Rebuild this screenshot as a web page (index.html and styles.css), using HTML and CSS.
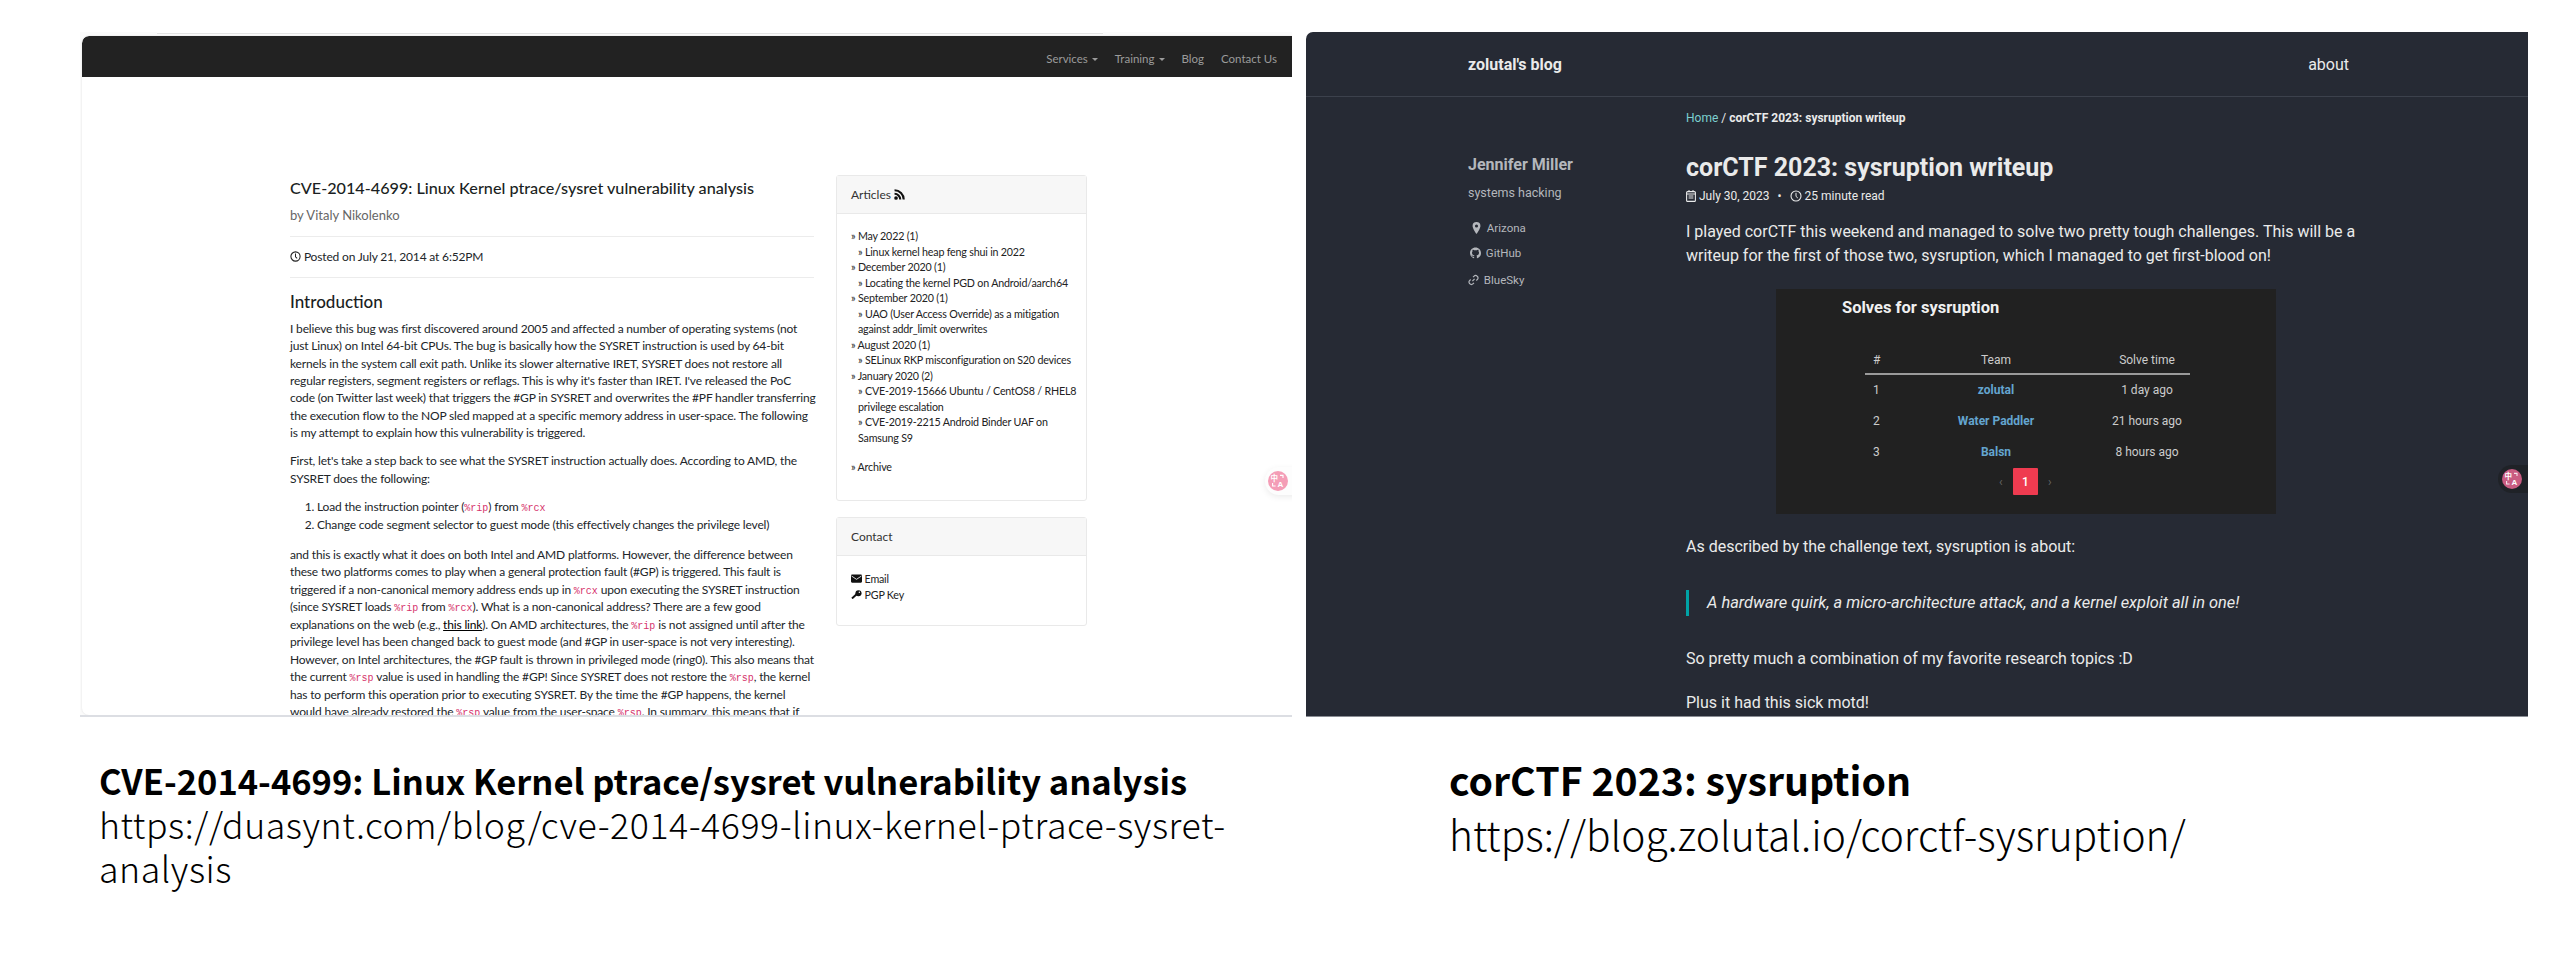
FILE: index.html
```html
<!DOCTYPE html>
<html lang="en">
<head>
<meta charset="utf-8">
<title>Blog references</title>
<link rel="stylesheet" href="styles.css">
</head>
<body>
<main class="page">
  <section class="fig fig-left">
    <div class="shot shot-light">
      <div class="tab-line"></div>
      <div class="lp">
        <nav class="lnav">
          <a>Services<i class="caret"></i></a>
          <a>Training<i class="caret"></i></a>
          <a>Blog</a>
          <a>Contact Us</a>
        </nav>
        <div class="lbody">
          <article class="larticle">
            <h1 class="ltitle">CVE-2014-4699: Linux Kernel ptrace/sysret vulnerability analysis</h1>
            <p class="lby">by Vitaly Nikolenko</p>
            <hr class="lhr lhr-a">
            <p class="lposted"><svg class="ico-clock" viewBox="0 0 12 12"><circle cx="6" cy="6" r="5" fill="none" stroke="#222" stroke-width="1.2"/><path d="M6 2.8V6.4L7.8 8" fill="none" stroke="#222" stroke-width="1.1"/></svg> Posted on July 21, 2014 at 6:52PM</p>
            <hr class="lhr lhr-b">
            <h2 class="lh2">Introduction</h2>
            <p class="lp1">I believe this bug was first discovered around 2005 and affected a number of operating systems (not<br>just Linux) on Intel 64-bit CPUs. The bug is basically how the SYSRET instruction is used by 64-bit<br>kernels in the system call exit path. Unlike its slower alternative IRET, SYSRET does not restore all<br>regular registers, segment registers or reflags. This is why it's faster than IRET. I've released the PoC<br>code (on Twitter last week) that triggers the #GP in SYSRET and overwrites the #PF handler transferring<br>the execution flow to the NOP sled mapped at a specific memory address in user-space. The following<br>is my attempt to explain how this vulnerability is triggered.</p>
            <p class="lp2">First, let's take a step back to see what the SYSRET instruction actually does. According to AMD, the<br>SYSRET does the following:</p>
            <ol class="lol">
              <li>Load the instruction pointer (<code>%rip</code>) from <code>%rcx</code></li>
              <li>Change code segment selector to guest mode (this effectively changes the privilege level)</li>
            </ol>
            <p class="lp3">and this is exactly what it does on both Intel and AMD platforms. However, the difference between<br>these two platforms comes to play when a general protection fault (#GP) is triggered. This fault is<br>triggered if a non-canonical memory address ends up in <code>%rcx</code> upon executing the SYSRET instruction<br>(since SYSRET loads <code>%rip</code> from <code>%rcx</code>). What is a non-canonical address? There are a few good<br>explanations on the web (e.g., <a class="ulink">this link</a>). On AMD architectures, the <code>%rip</code> is not assigned until after the<br>privilege level has been changed back to guest mode (and #GP in user-space is not very interesting).<br>However, on Intel architectures, the #GP fault is thrown in privileged mode (ring0). This also means that<br>the current <code>%rsp</code> value is used in handling the #GP! Since SYSRET does not restore the <code>%rsp</code>, the kernel<br>has to perform this operation prior to executing SYSRET. By the time the #GP happens, the kernel<br>would have already restored the <code>%rsp</code> value from the user-space <code>%rsp</code>. In summary, this means that if</p>
          </article>
          <aside class="lside">
            <div class="card card-articles">
              <div class="card-h">Articles <svg class="ico-rss" viewBox="0 0 12 12"><circle cx="2.2" cy="9.8" r="2" fill="#111"/><path d="M.6 5.2A6.2 6.2 0 0 1 6.8 11.4M.6 1.4A10 10 0 0 1 10.6 11.4" fill="none" stroke="#111" stroke-width="2.3"/></svg></div>
              <div class="card-b">
                <div>» May 2022 (1)</div>
                <div class="sub">» Linux kernel heap feng shui in 2022</div>
                <div>» December 2020 (1)</div>
                <div class="sub">» Locating the kernel PGD on Android/aarch64</div>
                <div>» September 2020 (1)</div>
                <div class="sub">» UAO (User Access Override) as a mitigation<br>against addr_limit overwrites</div>
                <div>» August 2020 (1)</div>
                <div class="sub">» SELinux RKP misconfiguration on S20 devices</div>
                <div>» January 2020 (2)</div>
                <div class="sub">» CVE-2019-15666 Ubuntu / CentOS8 / RHEL8<br>privilege escalation</div>
                <div class="sub">» CVE-2019-2215 Android Binder UAF on<br>Samsung S9</div>
                <div class="archive">» Archive</div>
              </div>
            </div>
            <div class="card card-contact">
              <div class="card-h">Contact</div>
              <div class="card-b">
                <div class="ci"><svg class="ico-mail" viewBox="0 0 12 9"><rect width="12" height="9" rx="1.2" fill="#111"/><path d="M.6 1.8 6 5.4l5.4-3.6" fill="none" stroke="#fff" stroke-width=".9"/></svg> Email</div>
                <div class="ci"><svg class="ico-mail" viewBox="0 0 12 10"><circle cx="8.2" cy="3.6" r="3.4" fill="#111"/><path d="M6.4 4.4 1 9.4" stroke="#111" stroke-width="2.2"/><circle cx="9.2" cy="2.6" r=".8" fill="#fff"/></svg> PGP Key</div>
              </div>
            </div>
          </aside>
        </div>
      </div>
      <div class="trans trans-l"><svg class="ico-tr" viewBox="0 0 20 20"><circle cx="10" cy="10" r="10" fill="#f49db6"/><text x="2.6" y="10" class="tr-zh">中</text><text x="9.4" y="16" class="tr-a">A</text><path d="M12 4.4h3v2.6M4.6 12v3h3" fill="none" stroke="#fff" stroke-width="1.1"/></svg></div>
    </div>
    <div class="cap cap-left">
      <h3>CVE-2014-4699: Linux Kernel ptrace/sysret vulnerability analysis</h3>
      <p>https://duasynt.com/blog/cve-2014-4699-linux-kernel-ptrace-sysret-<br>analysis</p>
    </div>
  </section>

  <section class="fig fig-right">
    <div class="shot shot-dark">
      <header class="rhead"><span class="rbrand">zolutal's blog</span><span class="rabout">about</span></header>
      <div class="rcrumb"><a class="teal">Home</a> / <b>corCTF 2023: sysruption writeup</b></div>
      <div class="rrow">
        <aside class="rside">
          <div class="rname">Jennifer Miller</div>
          <div class="rbio">systems hacking</div>
          <div class="rlink rl-1"><svg class="ico-s" viewBox="0 0 10 14"><path fill-rule="evenodd" d="M5 0a4.6 4.6 0 0 0-4.6 4.6C.4 7.6 5 14 5 14s4.6-6.4 4.6-9.4A4.6 4.6 0 0 0 5 0Zm0 6.4a1.8 1.8 0 1 1 0-3.6 1.8 1.8 0 0 1 0 3.6Z" fill="#b4b7bc"/></svg> Arizona</div>
          <div class="rlink rl-2"><svg class="ico-s" viewBox="0 0 16 16"><path fill="#b4b7bc" d="M8 0C3.58 0 0 3.58 0 8c0 3.54 2.29 6.53 5.47 7.59.4.07.55-.17.55-.38 0-.19-.01-.82-.01-1.49-2.01.37-2.53-.49-2.69-.94-.09-.23-.48-.94-.82-1.13-.28-.15-.68-.52-.01-.53.63-.01 1.08.58 1.23.82.72 1.21 1.87.87 2.33.66.07-.52.28-.87.51-1.07-1.78-.2-3.64-.89-3.64-3.95 0-.87.31-1.59.82-2.15-.08-.2-.36-1.02.08-2.12 0 0 .67-.21 2.2.82.64-.18 1.32-.27 2-.27.68 0 1.36.09 2 .27 1.53-1.04 2.2-.82 2.2-.82.44 1.1.16 1.92.08 2.12.51.56.82 1.27.82 2.15 0 3.07-1.87 3.75-3.65 3.95.29.25.54.73.54 1.48 0 1.07-.01 1.93-.01 2.2 0 .21.15.46.55.38A8.013 8.013 0 0016 8c0-4.42-3.58-8-8-8z"/></svg> GitHub</div>
          <div class="rlink rl-3"><svg class="ico-s" viewBox="0 0 14 14"><path d="M5.6 8.4 8.4 5.6M6.4 3.4l1.4-1.4a2.6 2.6 0 0 1 3.7 0l.5.5a2.6 2.6 0 0 1 0 3.7l-1.4 1.4M7.6 10.6 6.2 12a2.6 2.6 0 0 1-3.7 0L2 11.5a2.6 2.6 0 0 1 0-3.7l1.4-1.4" fill="none" stroke="#b4b7bc" stroke-width="1.5"/></svg> BlueSky</div>
        </aside>
        <article class="rart">
          <h1 class="rtitle">corCTF 2023: sysruption writeup</h1>
          <div class="rmeta"><svg class="ico-m" viewBox="0 0 10 12"><rect x=".6" y="1.6" width="8.8" height="9.8" rx="1" fill="none" stroke="#e8e9ea" stroke-width="1.1"/><path d="M.6 4h8.8M2.6 6h4.8M2.6 8h4.8M3 0v2M7 0v2" stroke="#e8e9ea" stroke-width="1"/></svg> July 30, 2023 <span class="dot">•</span> <svg class="ico-m2" viewBox="0 0 12 12"><circle cx="6" cy="6" r="5" fill="none" stroke="#e8e9ea" stroke-width="1.1"/><path d="M6 2.8V6.4L7.8 8" fill="none" stroke="#e8e9ea"/></svg> 25 minute read</div>
          <p class="rp rp-1">I played corCTF this weekend and managed to solve two pretty tough challenges. This will be a<br>writeup for the first of those two, sysruption, which I managed to get first-blood on!</p>
          <div class="solves">
            <div class="solves-t">Solves for sysruption</div>
            <table class="stable">
              <colgroup><col class="c1"><col class="c2"><col class="c3"></colgroup>
              <thead><tr><th class="tl">#</th><th>Team</th><th>Solve time</th></tr></thead>
              <tbody>
                <tr><td class="tl">1</td><td><a class="team">zolutal</a></td><td>1 day ago</td></tr>
                <tr><td class="tl">2</td><td><a class="team">Water Paddler</a></td><td>21 hours ago</td></tr>
                <tr><td class="tl">3</td><td><a class="team">Balsn</a></td><td>8 hours ago</td></tr>
              </tbody>
            </table>
            <div class="pager"><span class="chev">‹</span><span class="pnum">1</span><span class="chev">›</span></div>
          </div>
          <p class="rp rp-2">As described by the challenge text, sysruption is about:</p>
          <blockquote class="rq">A hardware quirk, a micro-architecture attack, and a kernel exploit all in one!</blockquote>
          <p class="rp rp-3">So pretty much a combination of my favorite research topics :D</p>
          <p class="rp rp-4">Plus it had this sick motd!</p>
        </article>
      </div>
      <div class="trans trans-r"><svg class="ico-tr" viewBox="0 0 20 20"><circle cx="10" cy="10" r="10" fill="#c95c82"/><text x="2.6" y="10" class="tr-zh">中</text><text x="9.4" y="16" class="tr-a">A</text><path d="M12 4.4h3v2.6M4.6 12v3h3" fill="none" stroke="#f3e3e9" stroke-width="1.1"/></svg></div>
    </div>
    <div class="cap cap-right">
      <h3>corCTF 2023: sysruption</h3>
      <p>https://blog.zolutal.io/corctf-sysruption/</p>
    </div>
  </section>
</main>
</body>
</html>
```

FILE: styles.css
```css
* { box-sizing: border-box; }
html, body { margin: 0; padding: 0; background: #fff; }
body { height: 971px; overflow: hidden; font-family: "Lato", "Liberation Sans", sans-serif; }
.page { display: flex; align-items: flex-start; padding-top: 32px; }
h1, h2, h3, p, ol, hr, blockquote { margin: 0; padding: 0; }

.fig-left { width: 1298px; padding-left: 80px; flex: none; }
.fig-right { width: 1222px; margin-left: 8px; flex: none; }

.shot { position: relative; overflow: hidden; height: 685px; }
.shot-light { width: 1212px; background: #fbfbfb; padding: 4px 0 0 2px; border-bottom: 2px solid #dcdee3; }
.tab-line { position: absolute; top: 0; left: 77px; width: 946px; height: 2px; background: #fff; border-bottom: 1px solid #e4e4e4; }
.lp { background: #fff; height: 679px; border-radius: 7px 0 0 7px; overflow: hidden; box-shadow: 0 0 2px #ddd; }

.lnav { height: 41px; background: #222; border-radius: 7px 0 0 0; display: flex; justify-content: flex-end; align-items: center; gap: 17px; padding: 3px 15px 0 0; font-size: 11.5px; color: #9b9b9b; }
.caret { display: inline-block; border: 3px solid transparent; border-top-color: #9b9b9b; border-bottom: 0; margin-left: 4px; vertical-align: 2px; }

.lbody { display: flex; padding: 98px 0 0 208px; color: #212529; font-size: 12px; letter-spacing: -.17px; }
.larticle { width: 524px; flex: none; padding-top: 3px; white-space: nowrap; }
.ltitle { font-size: 16.2px; line-height: 20px; font-weight: 500; color: #1b1f23; letter-spacing: 0; }
.lby { margin-top: 7px; font-size: 13px; line-height: 20px; color: #666; letter-spacing: 0; }
.lhr { border: 0; height: 1px; background: #ececec; }
.lhr-a { margin-top: 11px; }
.lposted { margin-top: 11px; line-height: 18px; font-size: 12px; }
.lhr-b { margin-top: 11px; }
.ico-clock { width: 11px; height: 11px; vertical-align: -1px; }
.lh2 { margin-top: 14px; font-size: 17px; line-height: 20px; font-weight: 500; color: #1b1f23; letter-spacing: 0; }
.lp1 { margin-top: 8px; line-height: 17.33px; }
.lp2 { margin-top: 11px; line-height: 17.33px; }
.lol { margin-top: 11px; padding-left: 27px; line-height: 18.3px; }
.lp3 { margin-top: 11px; line-height: 17.5px; }
code { font-family: "Liberation Mono", monospace; font-size: 10px; line-height: 1; color: #d6336c; letter-spacing: 0; }
.ulink { color: #000; text-decoration: underline; }

.lside { width: 251px; margin-left: 22px; flex: none; font-size: 10.7px; letter-spacing: -.19px; line-height: 15.5px; white-space: nowrap; }
.card { border: 1px solid #e9e9e9; border-radius: 3px; }
.card-articles { height: 326px; }
.card-contact { height: 109px; margin-top: 16px; }
.card-h { height: 38px; padding: 0 14px; line-height: 37px; font-size: 12px; letter-spacing: 0; background: #f7f7f7; border-bottom: 1px solid #e9e9e9; color: #333; }
.card-b { padding: 14px 14px; color: #222; }
.sub { padding-left: 7px; }
.archive { margin-top: 14px; }
.ico-rss { width: 11px; height: 11px; vertical-align: -1px; }
.ico-mail { width: 11px; height: 9px; }
.card-contact .card-b { padding-top: 15px; }

.trans { position: absolute; display: flex; align-items: center; }
.trans-l { left: 1185px; top: 435px; height: 28px; width: 40px; padding-left: 3px; background: #fdfdfd; border-radius: 14px 0 0 14px; box-shadow: 0 2px 6px rgba(0,0,0,.08); }
.trans-r { left: 1192px; top: 433px; height: 28px; width: 30px; padding-left: 4px; background: #1f2227; border-radius: 14px 0 0 14px; }
.ico-tr { width: 20px; height: 20px; display: block; flex: none; }
.tr-zh { font: 700 7.5px "Noto Sans CJK SC", sans-serif; fill: #fff; }
.tr-a { font: 700 8px "Liberation Sans", sans-serif; fill: #fff; }

.shot-dark { width: 1222px; background: #262a34; color: #eaeaea; font-family: "Roboto", sans-serif; border-bottom: 1px solid #8a8d94; border-radius: 7px 0 0 0; }
.rhead { height: 65px; border-bottom: 1px solid #3c414c; padding: 0 179px 0 162px; display: flex; justify-content: space-between; align-items: center; font-size: 16px; }
.rbrand { font-weight: 700; font-size: 16px; }
.rcrumb { margin: 14px 0 0 380px; font-size: 12px; line-height: 14px; color: #eaeaea; }
.teal { color: #7cd0d0; }
.rrow { display: flex; padding-left: 162px; margin-top: 28px; }
.rside { width: 218px; flex: none; color: #b4b7bc; font-size: 11.5px; }
.rname { font-weight: 700; font-size: 16px; line-height: 20px; margin-top: 2px; }
.rbio { margin-top: 11px; font-size: 12.5px; line-height: 14px; }
.rlink { line-height: 14px; white-space: nowrap; }
.rl-1 { margin-top: 21px; padding-left: 3px; }
.rl-2 { margin-top: 11px; padding-left: 2px; }
.rl-3 { margin-top: 13px; }
.ico-s { width: 11px; height: 12px; vertical-align: -2px; margin-right: 2px; }
.rart { width: 700px; flex: none; white-space: nowrap; }
.rtitle { font-size: 25px; line-height: 30px; font-weight: 700; color: #eaeaea; }
.rmeta { margin-top: 5px; font-size: 12px; line-height: 16px; }
.ico-m { width: 10px; height: 12px; vertical-align: -2px; }
.ico-m2 { width: 12px; height: 12px; vertical-align: -2px; }
.dot { margin: 0 5px; }
.rp { font-size: 16px; line-height: 24px; }
.rp-1 { margin-top: 16px; }
.solves { margin: 21px 0 0 90px; width: 500px; height: 225px; background: #212121; padding: 9px 0 0 66px; }
.solves-t { font-size: 16.5px; line-height: 20px; font-weight: 700; color: #f0f0f0; }
.stable { margin: 28px 0 0 23px; width: 325px; table-layout: fixed; border-collapse: collapse; font-size: 12px; color: #ccc; }
.c1 { width: 23px; } .c2 { width: 216px; } .c3 { width: 86px; }
.stable th { height: 28px; font-weight: 400; text-align: center; white-space: nowrap; border-bottom: 2px solid #9a9a9a; }
.stable td { height: 31px; padding: 0; text-align: center; white-space: nowrap; }
.stable .tl { text-align: left; padding-left: 8px; }
.team { color: #64a5cf; font-weight: 700; }
.pager { margin: 1px 0 0 21px; width: 325px; display: flex; justify-content: center; align-items: center; gap: 10px; }
.pnum { width: 25px; height: 27px; background: #ef3b50; color: #fff; display: flex; align-items: center; justify-content: center; font-size: 12px; font-weight: 500; border-radius: 1px; }
.chev { color: #666; font-size: 12px; width: 4px; }
.rp-2 { margin-top: 21px; }
.rq { margin-top: 31px; border-left: 3px solid #00a3a6; padding-left: 18px; font-style: italic; font-size: 16.4px; line-height: 26px; }
.rp-3 { margin-top: 31px; }
.rp-4 { margin-top: 20px; }

.cap { color: #000; font-family: "Noto Sans CJK SC", "Noto Sans", sans-serif; white-space: nowrap; }
.cap h3 { font-weight: 700; }
.cap p { font-weight: 300; }
.cap-left { margin-top: 41px; padding-left: 19px; }
.cap-left h3 { font-size: 34.5px; line-height: 44px; }
.cap-left p { font-size: 35.7px; letter-spacing: .55px; line-height: 44px; }
.cap-right { margin-top: 36px; padding-left: 143px; }
.cap-right h3 { font-size: 39.2px; line-height: 52px; }
.cap-right p { font-size: 40.7px; line-height: 58px; }
```
